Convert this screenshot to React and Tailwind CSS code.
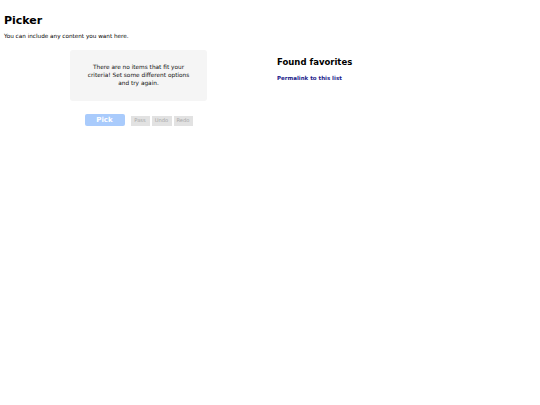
export default function App() {
  return (
    <div className="font-['DejaVu_Sans',sans-serif] text-black bg-white min-h-[405px] w-[540px]">
      <div className="px-[4px]">
        <h1 className="text-[11px] font-bold leading-none pt-[15px]">Picker</h1>
        <p className="text-[5.7px] leading-[8px] mt-[6px]">You can include any content you want here.</p>
      </div>
      <div className="flex">
        <div className="w-[277px] flex flex-col items-center">
          <div className="mt-[10px] w-[137px] h-[51px] rounded-[3px] bg-[#f5f5f5] pt-[13px] px-[16px] text-center text-[5.8px] leading-[8px] text-[#111]">
            There are no items that fit your criteria! Set some different options and try again.
          </div>
          <div className="mt-[13px] flex items-end">
            <button className="w-[40px] h-[12px] rounded-[2px] bg-[#a9cbfc] text-white font-bold text-[7px] leading-none">Pick</button>
            <div className="ml-[6px] flex gap-[2px]">
              <button className="w-[19px] h-[10px] bg-[#e2e2e2] text-[#a8a8a8] text-[5.2px] leading-none">Pass</button>
              <button className="w-[20px] h-[10px] bg-[#e2e2e2] text-[#a8a8a8] text-[5.2px] leading-none">Undo</button>
              <button className="w-[19px] h-[10px] bg-[#e2e2e2] text-[#a8a8a8] text-[5.2px] leading-none">Redo</button>
            </div>
          </div>
        </div>
        <div className="flex-1">
          <h2 className="mt-[18px] text-[8.5px] font-bold leading-none">Found favorites</h2>
          <a className="block mt-[7px] text-[5.5px] leading-[8px] font-bold text-[#1b1b8a]" href="#">Permalink to this list</a>
        </div>
      </div>
    </div>
  );
}
